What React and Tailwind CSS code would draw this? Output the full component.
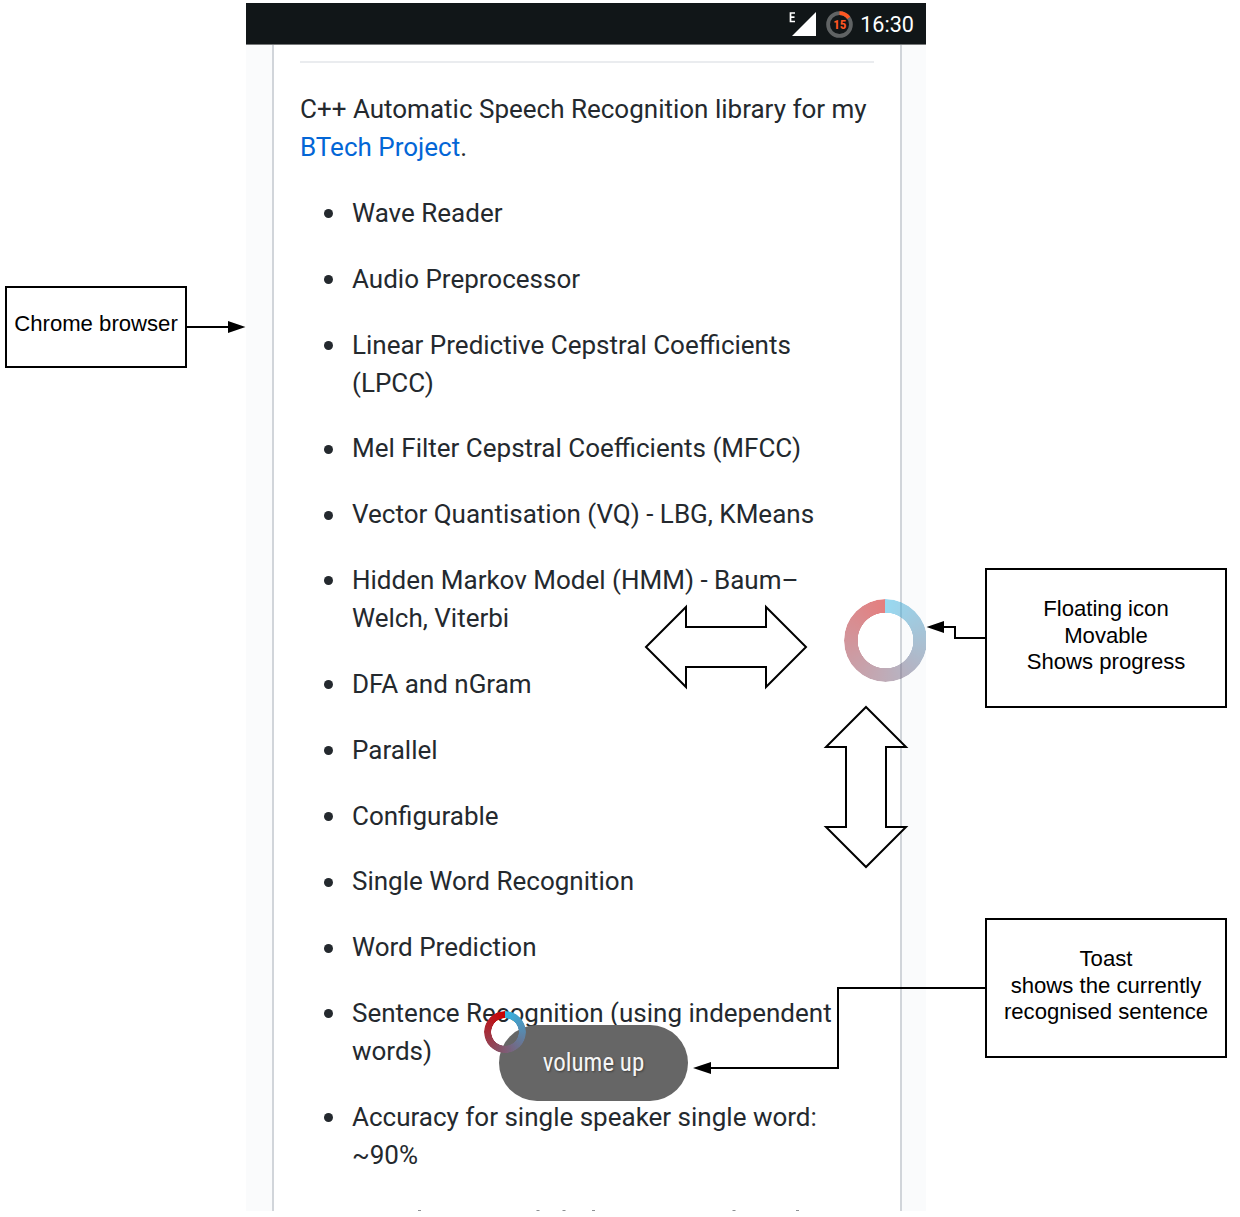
import React from "react";

const items = [
  ["Wave Reader"],
  ["Audio Preprocessor"],
  ["Linear Predictive Cepstral Coefficients", "(LPCC)"],
  ["Mel Filter Cepstral Coefficients (MFCC)"],
  ["Vector Quantisation (VQ) - LBG, KMeans"],
  ["Hidden Markov Model (HMM) - Baum–", "Welch, Viterbi"],
  ["DFA and nGram"],
  ["Parallel"],
  ["Configurable"],
  ["Single Word Recognition"],
  ["Word Prediction"],
  ["Sentence Recognition (using independent", "words)"],
  ["Accuracy for single speaker single word:", "~90%"],
];

function StatusBar() {
  return (
    <div className="flex h-[42px] items-center justify-end border-b border-[#77797a] bg-[#111618] pr-[12px] text-white">
      <svg width="29" height="28" viewBox="0 0 29 28" className="mr-[9px]">
        <path d="M28 2V26H4Z" fill="#fff" />
        <path d="M7 3H2.500V11.500H7M2.500 7.200H6.500" fill="none" stroke="#fff" strokeWidth="1.700" />
      </svg>
      <div className="mt-px mr-[7px] grid size-[27px] place-items-center">
        <svg width="27" height="27" viewBox="0 0 27 27" className="col-start-1 row-start-1">
          <circle cx="13.500" cy="13.500" r="11.400" fill="none" stroke="#606364" strokeWidth="3.800" />
          <path d="M13.500 2.100A11.400 11.400 0 0 1 22.700 6.800" fill="none" stroke="#ff5722" strokeWidth="3.800" />
        </svg>
        <span className="col-start-1 row-start-1 mt-px font-['Roboto_Condensed',Roboto,sans-serif] text-[13px] leading-none font-bold text-[#ff5722]">15</span>
      </div>
      <span className="mt-[2px] text-[21.600px] leading-none">16:30</span>
    </div>
  );
}

function Note({ className, children }) {
  return (
    <div className={className + " border-2 border-black bg-white text-center font-['Liberation_Sans',sans-serif] text-[22.130px] leading-[26.700px] whitespace-nowrap text-black"}>
      {children}
    </div>
  );
}

function Article() {
  return (
    <div className="mr-[24px] ml-[26px] h-[1166px] overflow-hidden border-x-2 border-[#d1d5da] bg-white px-[26px] pt-[16px] text-[26px] leading-[38px] whitespace-nowrap text-[#24292e]">
      <div className="h-[2px] w-[574px] bg-[#eaecef]" />
      <p className="mt-[27px]">
        C++ Automatic Speech Recognition library for my
        <br />
        <span className="text-[#0366d6]">BTech Project</span>.
      </p>
      <ul className="mt-[28px] flex flex-col gap-[27.830px] pl-[23.500px]">
        {items.map((lines) => (
          <li key={lines[0]} className="flex gap-[19.500px]">
            <span className="mt-[15.300px] size-[9px] shrink-0 rounded-full bg-[#24292e]" />
            <div>
              {lines.map((line) => (
                <div key={line}>{line}</div>
              ))}
            </div>
          </li>
        ))}
      </ul>
      <svg width="574" height="1" viewBox="0 0 574 1" className="mt-[36px] block" fill="#8e9194">
        <path d="M118 0h3v1h-3zM236.500 0h3v1h-3zM262.500 0h3v1h-3zM292 0h3v1h-3zM432.500 0h3v1h-3zM496 0h3v1h-3z" />
      </svg>
    </div>
  );
}

export default function App() {
  return (
    <div className="relative flex h-[1217px] w-[1240px] overflow-hidden bg-white font-[Roboto,sans-serif]">
      <div className="w-[246px] shrink-0 pt-[286px] pl-[5px]">
        <Note className="h-[82px] w-[182px] pt-[23px]">
          <span className="-mx-1">Chrome browser</span>
        </Note>
      </div>

      <div className="relative mt-[3px] h-[1208px] w-[680px] shrink-0 overflow-hidden bg-[#fafbfc]">
        <StatusBar />
        <Article />
        <div className="absolute top-[596px] left-[597.500px] size-[83px] rounded-full bg-[conic-gradient(#33b5e5,#cc0000)] opacity-50 [mask:radial-gradient(circle,transparent_27.500px,#000_28px)]" />
        <div className="absolute top-[1022px] left-[253px] flex h-[76px] w-[189px] items-center justify-center rounded-full bg-[#666] font-['Roboto_Condensed',Roboto,sans-serif] text-[25px] text-[#f5f5f5] [text-shadow:1px_1px_2px_rgba(0,0,0,0.400)]">
          volume up
        </div>
        <div className="absolute top-[1007.500px] left-[238px] size-[42px] rounded-full bg-[conic-gradient(#33b5e5,#cc0000)] [mask:radial-gradient(circle,transparent_13.500px,#000_14px)]" />
      </div>

      <div className="flex shrink-0 flex-col gap-[210px] pt-[568px] pl-[59px]">
        <Note className="h-[140px] w-[242px] pt-[26px]">
          Floating icon<br />Movable<br />Shows progress
        </Note>
        <Note className="h-[140px] w-[242px] pt-[26px]">
          Toast<br />shows the currently<br />recognised sentence
        </Note>
      </div>

      <svg width="1240" height="1217" viewBox="0 0 1240 1217" className="pointer-events-none absolute inset-0" fill="none" stroke="#000" strokeWidth="2">
        <path d="M646 647L686 607V627H766V607L806 647L766 687V667H686V687Z" fill="#fff" />
        <path d="M866 707L906 747H886V827H906L866 867L826 827H846V747H826Z" fill="#fff" />
        <path d="M187 327H230M985 638H955V627H942M985 988H838V1068H708" />
        <path d="M245.500 327L228 321V333ZM926.500 627L944 621V633ZM693 1068L711 1062V1074Z" fill="#000" stroke="none" />
      </svg>
    </div>
  );
}
